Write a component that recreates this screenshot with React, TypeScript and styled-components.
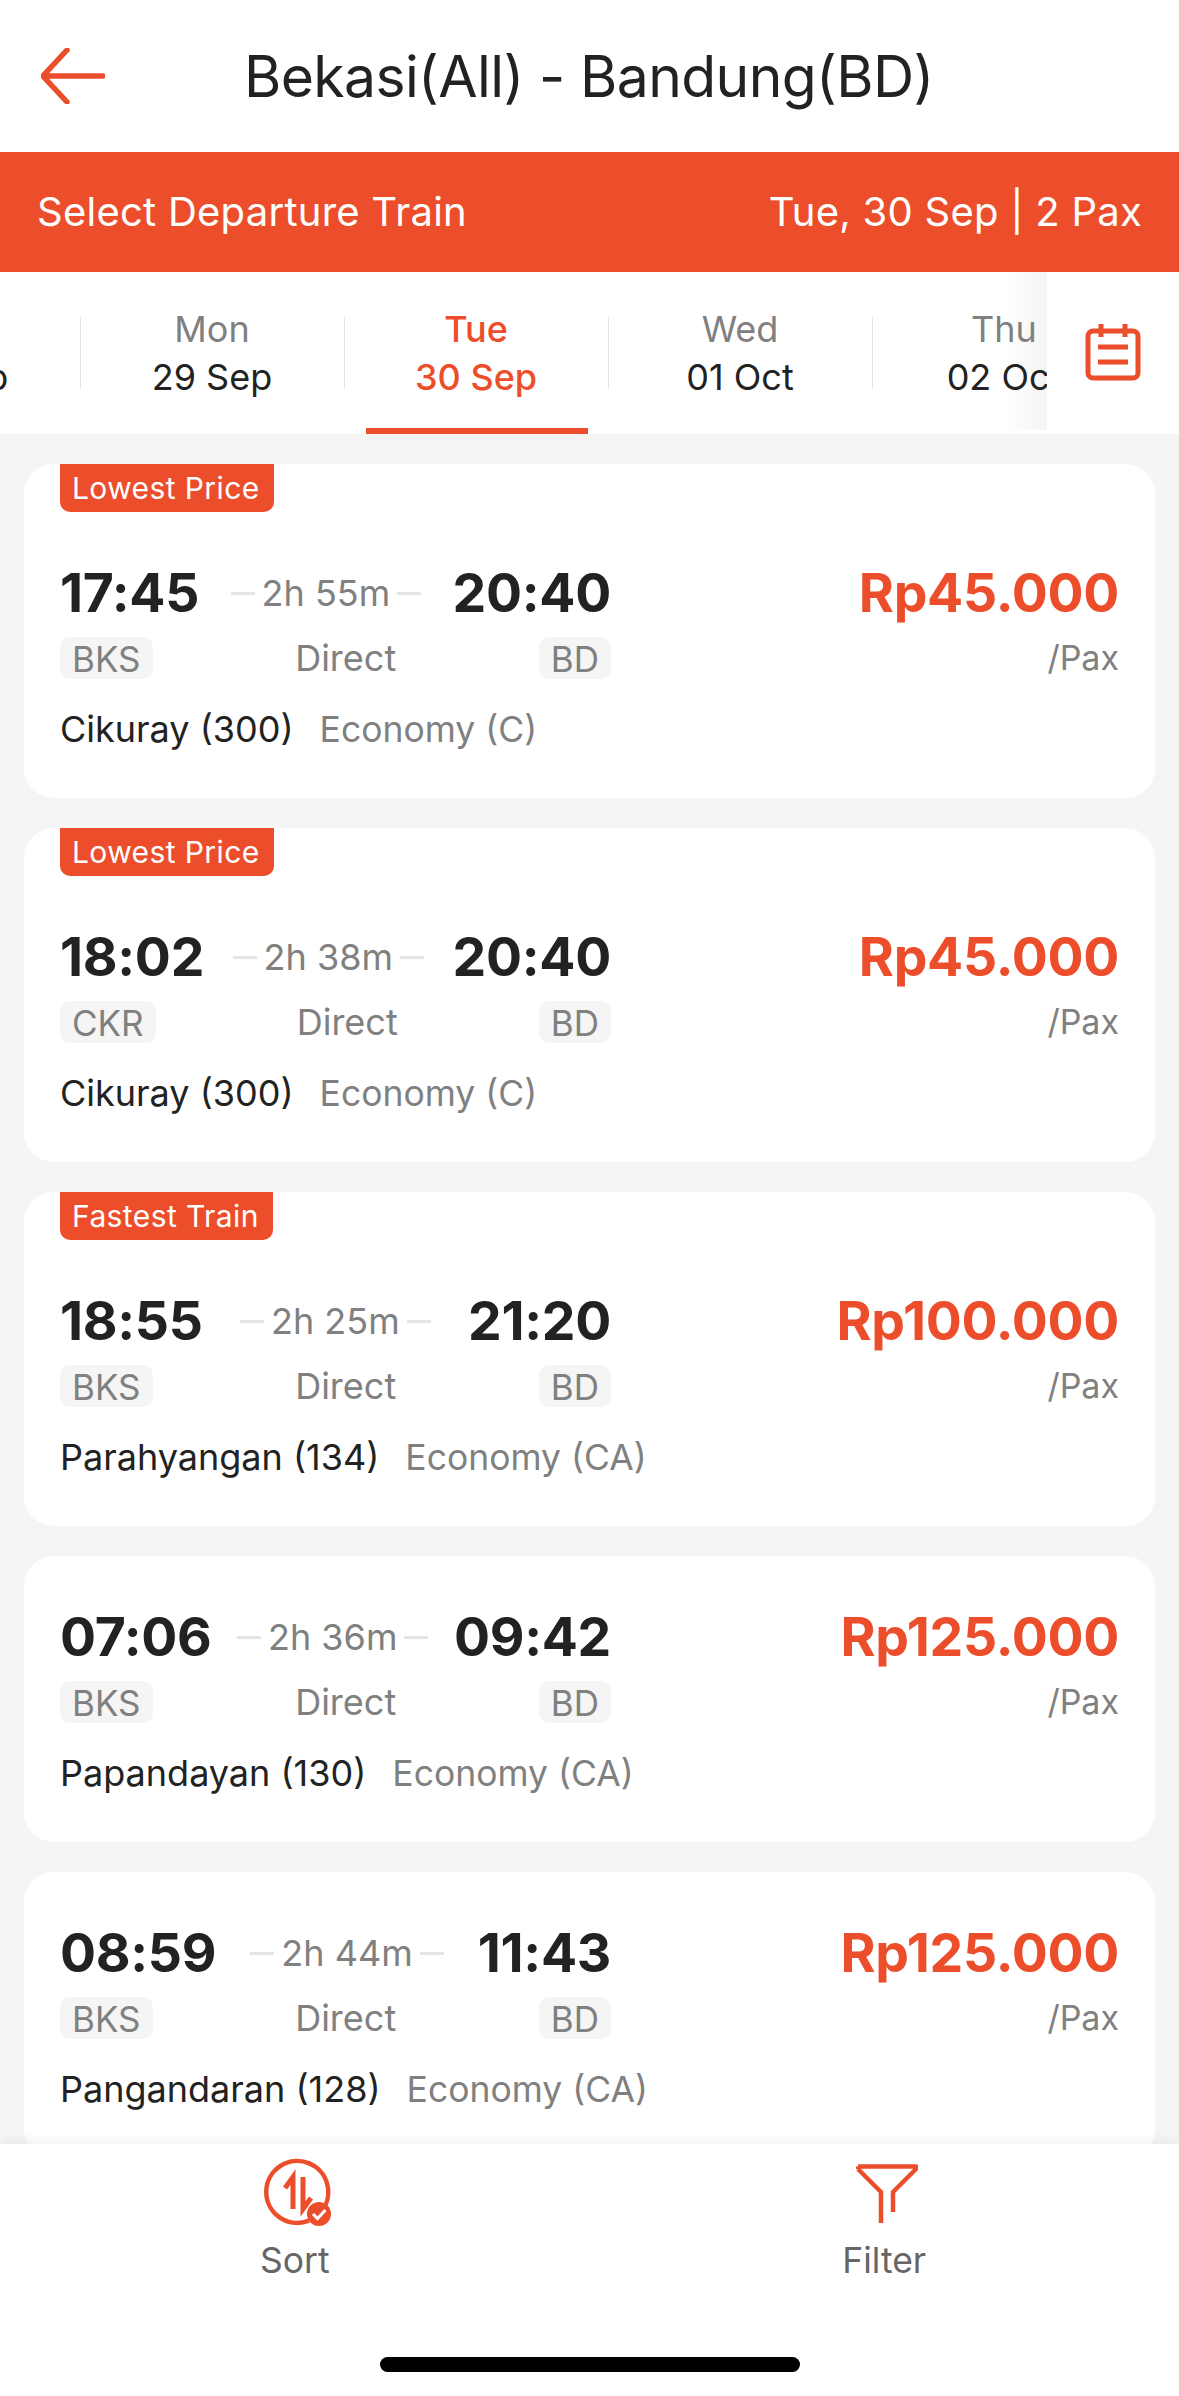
import styled, { createGlobalStyle } from 'styled-components'

const ORANGE = '#ec4e2b'

const days = [
  { day: 'Sun', date: '28 Sep' },
  { day: 'Mon', date: '29 Sep' },
  { day: 'Tue', date: '30 Sep', active: true },
  { day: 'Wed', date: '01 Oct' },
  { day: 'Thu', date: '02 Oct' },
]

const trains = [
  { badge: 'Lowest Price', from: '17:45', to: '20:40', dur: '2h 55m', code: 'BKS', price: 'Rp45.000', name: 'Cikuray (300)', cls: 'Economy (C)' },
  { badge: 'Lowest Price', from: '18:02', to: '20:40', dur: '2h 38m', code: 'CKR', price: 'Rp45.000', name: 'Cikuray (300)', cls: 'Economy (C)' },
  { badge: 'Fastest Train', from: '18:55', to: '21:20', dur: '2h 25m', code: 'BKS', price: 'Rp100.000', name: 'Parahyangan (134)', cls: 'Economy (CA)' },
  { from: '07:06', to: '09:42', dur: '2h 36m', code: 'BKS', price: 'Rp125.000', name: 'Papandayan (130)', cls: 'Economy (CA)' },
  { from: '08:59', to: '11:43', dur: '2h 44m', code: 'BKS', price: 'Rp125.000', name: 'Pangandaran (128)', cls: 'Economy (CA)' },
]

export default function App() {
  return (
    <Page>
      <GlobalStyle />
      <Header>
        <BackIcon viewBox="0 0 64 56" fill="none">
          <path d="M26 2 L2 28 L26 54 M2 28 H62" stroke={ORANGE} strokeWidth="5.5" strokeLinecap="round" strokeLinejoin="round" />
        </BackIcon>
        <Title>Bekasi(All) - Bandung(BD)</Title>
      </Header>
      <SubHeader>
        <span>Select Departure Train</span>
        <span>Tue, 30 Sep | 2 Pax</span>
      </SubHeader>
      <DateStrip>
        <DateViewport>
          <Fade />
          <DateTrack>
            {days.map((d) => (
              <DateTab key={d.day} $active={d.active}>
                <DayName $active={d.active}>{d.day}</DayName>
                <DateLabel $active={d.active}>{d.date}</DateLabel>
              </DateTab>
            ))}
          </DateTrack>
        </DateViewport>
        <CalendarSlot>
          <svg width="56" height="58" viewBox="0 0 56 58" fill="none" stroke={ORANGE} strokeWidth="5">
            <rect x="3" y="8" width="50" height="47" rx="5" />
            <path d="M16 1V14M40 1V14" />
            <path d="M13 24H43M13 39H43" />
          </svg>
        </CalendarSlot>
      </DateStrip>
      <List>
        {trains.map((t, i) => (
          <Card key={i}>
            {t.badge && <Badge>{t.badge}</Badge>}
            <TimeRow>
              <Route>
                <Time>{t.from}</Time>
                <Duration>
                  <Dash />
                  {t.dur}
                  <Dash />
                </Duration>
                <Time>{t.to}</Time>
              </Route>
              <Price>{t.price}</Price>
            </TimeRow>
            <CodeRow>
              <Route>
                <Code>{t.code}</Code>
                <Direct>Direct</Direct>
                <Code>BD</Code>
              </Route>
              <PerPax>/Pax</PerPax>
            </CodeRow>
            <TrainRow>
              <TrainName>{t.name}</TrainName>
              <TrainClass>{t.cls}</TrainClass>
            </TrainRow>
          </Card>
        ))}
      </List>
      <Footer>
        <Actions>
          <Action>
            <ActionIcon $shift={12}>
              <svg width="76" height="72" viewBox="0 0 76 72" fill="none" stroke={ORANGE}>
                <path d="M56 56 A31 31 0 1 0 46 62.600" strokeWidth="4.500" />
                <path d="M30 51V19L22 30" strokeWidth="5" />
                <path d="M40 19V51L48 40" strokeWidth="5" />
                <circle cx="56" cy="56" r="12" fill={ORANGE} stroke="none" />
                <path d="M50 56L54.500 60.500L62.500 52" stroke="#fff" strokeWidth="3" />
              </svg>
            </ActionIcon>
            <ActionLabel>Sort</ActionLabel>
          </Action>
          <Action>
            <ActionIcon $shift={6}>
              <svg width="62" height="62" viewBox="0 0 62 62" fill="none" stroke={ORANGE} strokeWidth="4.500">
                <path d="M2 3.500H60V6L37 29V49M2 6V3.500M2 6L25 29V60" strokeLinejoin="round" />
              </svg>
            </ActionIcon>
            <ActionLabel>Filter</ActionLabel>
          </Action>
        </Actions>
        <HomeBar />
      </Footer>
    </Page>
  )
}

const GlobalStyle = createGlobalStyle`
  html, body {
    margin: 0;
    padding: 0;
    background: #fff;
  }
  * {
    box-sizing: border-box;
  }
`

const Page = styled.div`
  display: flex;
  flex-direction: column;
  width: 1179px;
  height: 2396px;
  overflow: hidden;
  background: #f5f5f5;
  font-family: Inter, 'Liberation Sans', sans-serif;
  color: #222;
`

const Header = styled.header`
  display: flex;
  align-items: center;
  flex: 0 0 152px;
  padding: 0 0 0 41px;
  background: #fff;
`

const BackIcon = styled.svg`
  flex: 0 0 64px;
  width: 64px;
  height: 56px;
  margin-right: 139px;
`

const Title = styled.h1`
  margin: 0;
  font-size: 57px;
  font-weight: 400;
  letter-spacing: -0.6px;
  line-height: 1;
  white-space: nowrap;
`

const SubHeader = styled.div`
  display: flex;
  align-items: center;
  justify-content: space-between;
  flex: 0 0 120px;
  padding: 0 37px 2px 37px;
  background: ${ORANGE};
  color: #fff;
  font-size: 40px;
  letter-spacing: 0.25px;
`

const DateStrip = styled.div`
  display: flex;
  flex: 0 0 162px;
  background: #fff;
`

const DateViewport = styled.div`
  position: relative;
  flex: 0 0 1047px;
  overflow: hidden;
`

const DateTrack = styled.div`
  position: relative;
  display: flex;
  margin-left: -184px;
`

const DateTab = styled.div<{ $active?: boolean }>`
  position: relative;
  flex: 0 0 264px;
  height: 162px;
  padding-top: 36px;
  text-align: center;

  &::before {
    content: '';
    position: absolute;
    left: 0;
    top: 45px;
    height: 72px;
    width: 1px;
    background: #e2e2e2;
  }

  &::after {
    content: '';
    display: ${(p) => (p.$active ? 'block' : 'none')};
    position: absolute;
    left: 22px;
    bottom: 0;
    width: 222px;
    height: 6px;
    background: ${ORANGE};
  }
`

const DayName = styled.div<{ $active?: boolean }>`
  font-size: 36px;
  line-height: 42px;
  font-weight: ${(p) => (p.$active ? 500 : 400)};
  color: ${(p) => (p.$active ? ORANGE : '#808080')};
`

const DateLabel = styled.div<{ $active?: boolean }>`
  margin-top: 6px;
  font-size: 36px;
  line-height: 42px;
  font-weight: ${(p) => (p.$active ? 500 : 400)};
  color: ${(p) => (p.$active ? ORANGE : '#222')};
`

const Fade = styled.div`
  position: absolute;
  top: 0;
  right: 0;
  width: 40px;
  height: 158px;
  background: linear-gradient(to right, rgba(244, 244, 244, 0), #f4f4f4);
`

const CalendarSlot = styled.div`
  display: flex;
  align-items: center;
  flex: 1;
  padding: 0 0 2px 38px;

  svg {
    display: block;
  }
`

const List = styled.main`
  flex: 1;
  min-height: 0;
  overflow: hidden;
  padding: 30px 24px 0;
`

const Card = styled.article`
  margin-bottom: 30px;
  padding: 0 36px 0 36px;
  background: #fff;
  border-radius: 30px;
`

const Badge = styled.div`
  display: flex;
  align-items: center;
  width: fit-content;
  height: 48px;
  padding: 0 14px 0 12px;
  border-radius: 0 0 10px 10px;
  background: ${ORANGE};
  color: #fff;
  font-size: 30px;
  letter-spacing: 0.4px;
`

const TimeRow = styled.div`
  display: flex;
  align-items: center;
  justify-content: space-between;
  padding-top: 51px;
  height: 111px;
`

const CodeRow = styled.div`
  display: flex;
  align-items: center;
  justify-content: space-between;
  height: 42px;
  margin-top: 14px;
`

const Route = styled.div`
  display: flex;
  align-items: center;
  flex: 0 0 551px;
`

const Time = styled.div`
  font-size: 53.5px;
  font-weight: 700;
  line-height: 60px;
  letter-spacing: -0.3px;
`

const Duration = styled.div`
  display: flex;
  align-items: center;
  justify-content: center;
  flex: 1;
  gap: 7px;
  font-size: 36px;
  color: #808080;
`

const Dash = styled.span`
  width: 24px;
  height: 3px;
  background: #e4e4e4;
`

const Price = styled.div`
  font-size: 53.5px;
  font-weight: 700;
  line-height: 60px;
  letter-spacing: -0.3px;
  color: ${ORANGE};
`

const Code = styled.div`
  padding: 0 12px;
  height: 42px;
  line-height: 45px;
  border-radius: 10px;
  background: #f5f5f5;
  font-size: 35px;
  color: #808080;
`

const Direct = styled.div`
  flex: 1;
  text-align: center;
  font-size: 36px;
  line-height: 46px;
  color: #808080;
`

const PerPax = styled.div`
  font-size: 34px;
  line-height: 46px;
  color: #808080;
`

const TrainRow = styled.div`
  display: flex;
  align-items: center;
  gap: 26px;
  height: 119px;
  padding-bottom: 19px;
`

const TrainName = styled.span`
  font-size: 36px;
  color: #222;
`

const TrainClass = styled.span`
  font-size: 35.5px;
  color: #808080;
`

const Footer = styled.footer`
  position: relative;
  display: flex;
  flex-direction: column;
  flex: 0 0 252px;
  background: #fff;
  box-shadow: 0 -4px 10px rgba(0, 0, 0, 0.05);
`

const Actions = styled.div`
  display: grid;
  grid-template-columns: 1fr 1fr;
  height: 213px;
  padding-top: 14px;
`

const Action = styled.div`
  display: flex;
  flex-direction: column;
  align-items: center;
`

const ActionIcon = styled.div<{ $shift: number }>`
  display: flex;
  align-items: center;
  justify-content: center;
  height: 72px;
  padding-left: ${(p) => p.$shift}px;

  svg {
    display: block;
  }
`

const ActionLabel = styled.div`
  margin-top: 10px;
  font-size: 35.5px;
  line-height: 42px;
  color: #666;
`

const HomeBar = styled.div`
  width: 420px;
  height: 15px;
  margin: 0 auto;
  border-radius: 8px;
  background: #000;
`
